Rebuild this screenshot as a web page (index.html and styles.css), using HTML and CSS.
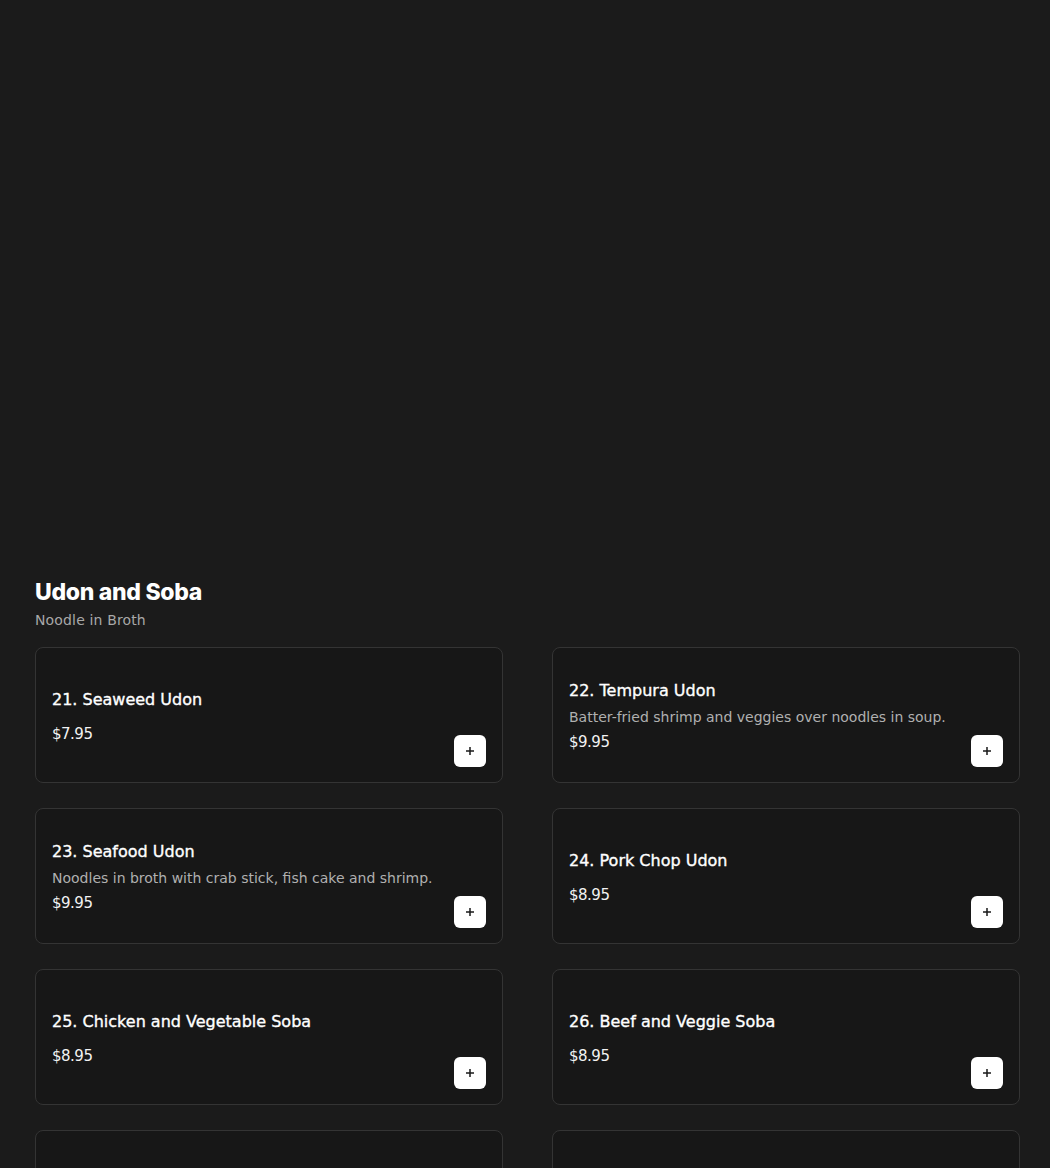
FILE: index.html
```html
<!DOCTYPE html>
<html lang="en">
<head>
<meta charset="utf-8">
<title>Udon and Soba</title>
<link rel="stylesheet" href="styles.css">
</head>
<body>
<div class="hero"></div>
<section class="menu-section">
  <header class="section-head">
    <h2 class="section-title">Udon and Soba</h2>
    <p class="section-sub">Noodle in Broth</p>
  </header>
  <div class="grid">
    <article class="card">
      <div class="info">
        <h3 class="item-name">21. Seaweed Udon</h3>
        <div class="price">$7.95</div>
      </div>
      <button class="add" aria-label="Add"><svg viewBox="0 0 10 10" width="10" height="10"><path d="M5 1v8M1 5h8" stroke="#1a1a1a" stroke-width="1.5"/></svg></button>
    </article>
    <article class="card">
      <div class="info">
        <h3 class="item-name">22. Tempura Udon</h3>
        <p class="desc">Batter-fried shrimp and veggies over noodles in soup.</p>
        <div class="price">$9.95</div>
      </div>
      <button class="add" aria-label="Add"><svg viewBox="0 0 10 10" width="10" height="10"><path d="M5 1v8M1 5h8" stroke="#1a1a1a" stroke-width="1.5"/></svg></button>
    </article>
    <article class="card">
      <div class="info">
        <h3 class="item-name">23. Seafood Udon</h3>
        <p class="desc">Noodles in broth with crab stick, fish cake and shrimp.</p>
        <div class="price">$9.95</div>
      </div>
      <button class="add" aria-label="Add"><svg viewBox="0 0 10 10" width="10" height="10"><path d="M5 1v8M1 5h8" stroke="#1a1a1a" stroke-width="1.5"/></svg></button>
    </article>
    <article class="card">
      <div class="info">
        <h3 class="item-name">24. Pork Chop Udon</h3>
        <div class="price">$8.95</div>
      </div>
      <button class="add" aria-label="Add"><svg viewBox="0 0 10 10" width="10" height="10"><path d="M5 1v8M1 5h8" stroke="#1a1a1a" stroke-width="1.5"/></svg></button>
    </article>
    <article class="card">
      <div class="info">
        <h3 class="item-name">25. Chicken and Vegetable Soba</h3>
        <div class="price">$8.95</div>
      </div>
      <button class="add" aria-label="Add"><svg viewBox="0 0 10 10" width="10" height="10"><path d="M5 1v8M1 5h8" stroke="#1a1a1a" stroke-width="1.5"/></svg></button>
    </article>
    <article class="card">
      <div class="info">
        <h3 class="item-name">26. Beef and Veggie Soba</h3>
        <div class="price">$8.95</div>
      </div>
      <button class="add" aria-label="Add"><svg viewBox="0 0 10 10" width="10" height="10"><path d="M5 1v8M1 5h8" stroke="#1a1a1a" stroke-width="1.5"/></svg></button>
    </article>
    <article class="card"></article>
    <article class="card"></article>
  </div>
</section>
</body>
</html>
```
FILE: styles.css
```css
* { box-sizing: border-box; }
html, body {
  margin: 0;
  padding: 0;
  background: #1b1b1b;
  color: #ffffff;
  font-family: "DejaVu Sans", "Open Sans", sans-serif;
}
.hero {
  height: 578px;
}
.menu-section {
  padding: 0 30px 0 35px;
}
.section-head {
  margin-bottom: 17px;
}
.section-title {
  margin: 0;
  font-family: "Inter", "DejaVu Sans", sans-serif;
  font-weight: 800;
  font-size: 23px;
  line-height: 28px;
  letter-spacing: -0.3px;
  color: #ffffff;
}
.section-sub {
  margin: 4px 0 0;
  font-size: 14px;
  line-height: 20px;
  letter-spacing: 0.15px;
  color: #a8a8a8;
}
.grid {
  display: grid;
  grid-template-columns: 1fr 1fr;
  column-gap: 49px;
  row-gap: 25px;
}
.card {
  height: 136px;
  background: #171717;
  border: 1px solid #343434;
  border-radius: 8px;
  padding: 17px 16px 15px;
  display: flex;
  align-items: center;
  justify-content: space-between;
}
.info {
  display: flex;
  flex-direction: column;
}
.item-name {
  margin: 0;
  font-size: 16px;
  line-height: 22px;
  font-weight: 400;
  -webkit-text-stroke: 0.35px #ffffff;
  color: #ffffff;
}
.desc {
  margin: 6px 0 0;
  font-size: 14px;
  line-height: 18px;
  color: #b0b0b0;
}
.price {
  margin-top: 13px;
  font-size: 15px;
  line-height: 20px;
  letter-spacing: -0.5px;
  color: #f2f2f2;
}
.desc + .price {
  margin-top: 6px;
}
.add {
  align-self: flex-end;
  width: 32px;
  height: 32px;
  border: none;
  border-radius: 6px;
  background: #ffffff;
  display: flex;
  align-items: center;
  justify-content: center;
  padding: 0;
  cursor: pointer;
  flex-shrink: 0;
}
```
